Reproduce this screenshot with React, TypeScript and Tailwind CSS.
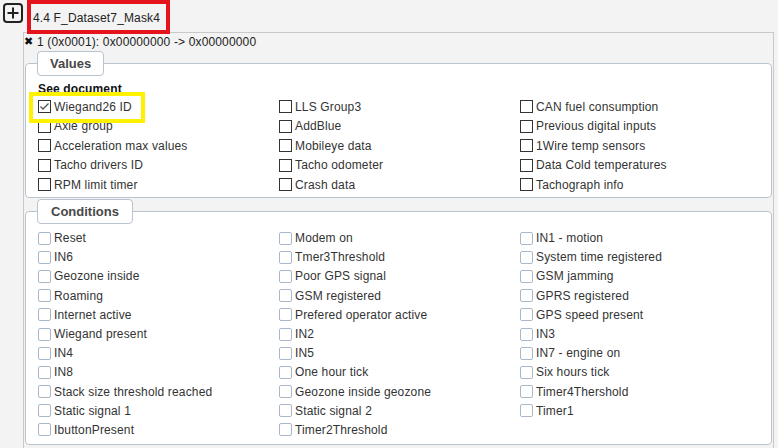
import React from "react";

const valuesItems: [string, boolean][] = [
  ["Wiegand26 ID", true], ["LLS Group3", false], ["CAN fuel consumption", false],
  ["Axle group", false], ["AddBlue", false], ["Previous digital inputs", false],
  ["Acceleration max values", false], ["Mobileye data", false], ["1Wire temp sensors", false],
  ["Tacho drivers ID", false], ["Tacho odometer", false], ["Data Cold temperatures", false],
  ["RPM limit timer", false], ["Crash data", false], ["Tachograph info", false],
];

const conditionItems: string[] = [
  "Reset", "Modem on", "IN1 - motion",
  "IN6", "Tmer3Threshold", "System time registered",
  "Geozone inside", "Poor GPS signal", "GSM jamming",
  "Roaming", "GSM registered", "GPRS registered",
  "Internet active", "Prefered operator active", "GPS speed present",
  "Wiegand present", "IN2", "IN3",
  "IN4", "IN5", "IN7 - engine on",
  "IN8", "One hour tick", "Six hours tick",
  "Stack size threshold reached", "Geozone inside geozone", "Timer4Thershold",
  "Static signal 1", "Static signal 2", "Timer1",
  "IbuttonPresent", "Timer2Threshold", "",
];

function ValueBox({ checked }: { checked: boolean }) {
  return (
    <span className="w-[13px] h-[13px] border border-[#333] bg-white flex items-center justify-center shrink-0">
      {checked && (
        <svg width="11" height="11" viewBox="0 0 11 11">
          <polyline points="1.5,5.5 4,8 9.5,2.5" fill="none" stroke="#555" strokeWidth="1.3" />
        </svg>
      )}
    </span>
  );
}

function CondBox() {
  return <span className="w-[13px] h-[13px] border border-[#a9b8c9] rounded-[2px] bg-white shrink-0" />;
}

export default function App() {
  return (
    <div className="relative w-[778px] h-[448px] overflow-hidden bg-[#f3f3f3] text-[12px] tracking-[0.15px] text-[#333] font-['Liberation_Sans',Arial,sans-serif]">
      {/* header */}
      <div className="flex h-[32px]">
        <svg className="ml-[3px] mt-[3px]" width="20" height="20" viewBox="0 0 20 20">
          <rect x="1" y="1" width="18" height="18" rx="3" fill="none" stroke="#222" strokeWidth="2" />
          <line x1="10" y1="4.5" x2="10" y2="15.5" stroke="#222" strokeWidth="2" />
          <line x1="4.5" y1="10" x2="15.5" y2="10" stroke="#222" strokeWidth="2" />
        </svg>
        <div className="ml-[10px] mt-[11px] h-[14px] leading-[14px] text-[#222]">4.4 F_Dataset7_Mask4</div>
      </div>

      {/* panel */}
      <div className="ml-[23px] w-[751px] h-[430px] border border-[#c9c9c9] bg-[#f3f3f3]">
        <div className="h-[17px] flex items-center leading-[14px] text-[#222]">
          <span className="font-['DejaVu_Sans',sans-serif] text-[11px] font-bold w-[13px] text-[#111]">✖</span>
          <span>1 (0x0001): 0x00000000 -&gt; 0x00000000</span>
        </div>

        <fieldset className="mx-[1px] mt-[1px] border border-[#b9c4d0] rounded-[4px] bg-white pl-[12px] pb-[2px]">
          <legend className="-ml-[1px] h-[25px] px-[12px] border border-[#b9c4d0] rounded-[4px] bg-white font-bold text-[13px] tracking-normal text-[#484848] leading-[23px]">
            Values
          </legend>
          <div className="mt-[6px] h-[15px] leading-[15px] font-bold text-[#111]">See document</div>
          <div className="grid grid-cols-[241px_241px_241px]">
            {valuesItems.map(([label, checked], i) => (
              <div key={i} className="flex items-center h-[19.5px]">
                <ValueBox checked={checked} />
                <span className="ml-[3px] leading-[14px]">{label}</span>
              </div>
            ))}
          </div>
        </fieldset>

        <fieldset className="mx-[1px] mt-[1px] border border-[#b9c4d0] rounded-[4px] bg-white pl-[12px] pb-[4px]">
          <legend className="-ml-[1px] h-[25px] px-[13px] border border-[#b9c4d0] rounded-[4px] bg-white font-bold text-[13px] tracking-normal text-[#484848] leading-[23px]">
            Conditions
          </legend>
          <div className="mt-[5px] grid grid-cols-[241px_241px_241px]">
            {conditionItems.map((label, i) => (
              <div key={i} className="flex items-center h-[19.2px]">
                {label && (
                  <>
                    <CondBox />
                    <span className="ml-[3px] leading-[14px]">{label}</span>
                  </>
                )}
              </div>
            ))}
          </div>
        </fieldset>
      </div>

      {/* annotation highlights */}
      <div className="absolute left-[27px] top-0 w-[143px] h-[34px] border-[4px] border-[#e5131c] pointer-events-none" />
      <div className="absolute left-[29px] top-[92px] w-[116px] h-[31px] border-[4px] border-[#fff200] pointer-events-none" />
    </div>
  );
}
